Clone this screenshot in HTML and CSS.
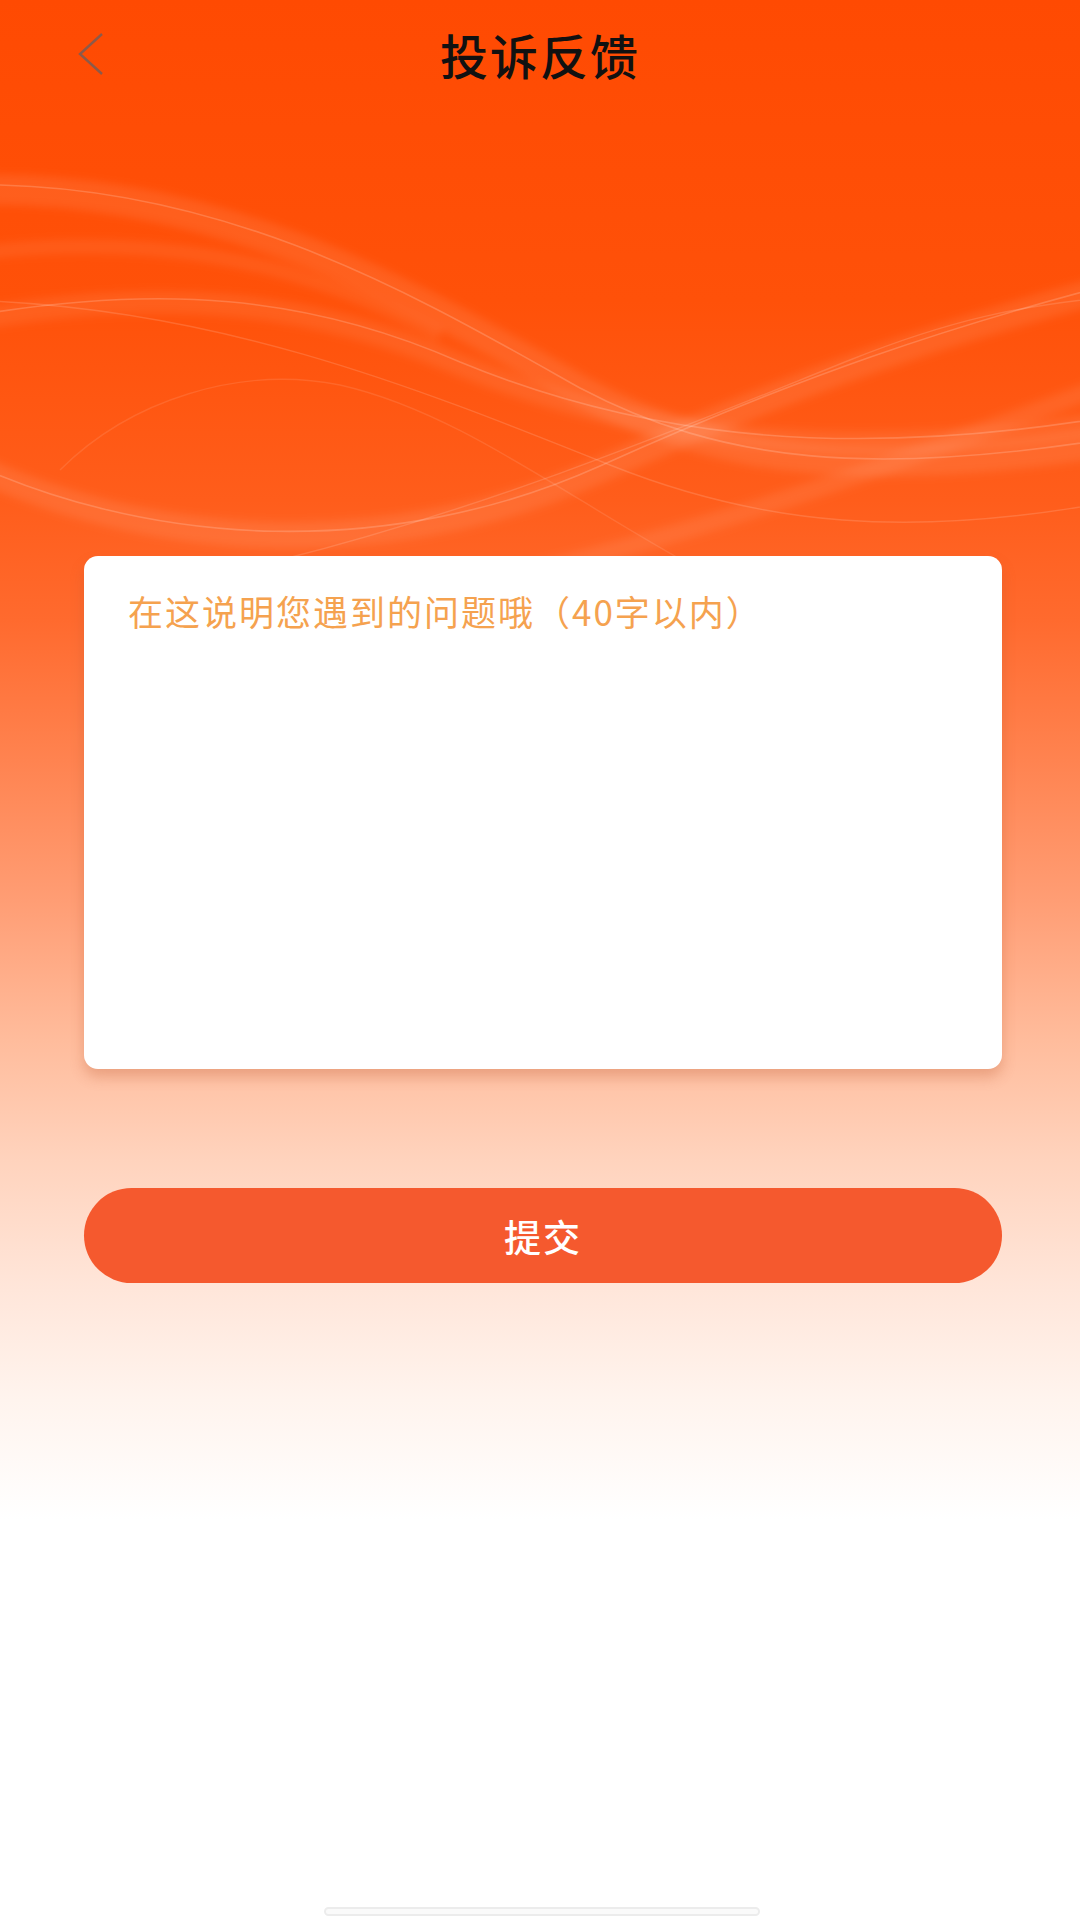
FILE: index.html
```html
<!DOCTYPE html>
<html lang="zh-CN">
<head>
<meta charset="utf-8">
<title>投诉反馈</title>
<link rel="stylesheet" href="styles.css">
</head>
<body>
<div class="page">
  <svg class="waves" viewBox="0 0 1080 600" preserveAspectRatio="none" aria-hidden="true">
    <defs>
      <filter id="soft" x="-10%" y="-30%" width="120%" height="160%">
        <feGaussianBlur stdDeviation="4"/>
      </filter>
    </defs>
    <g fill="none" stroke="#ffffff" filter="url(#soft)">
      <path d="M-40,190 C220,180 420,300 580,390 C720,465 870,480 1120,440" stroke-opacity="0.09" stroke-width="30"/>
      <path d="M-40,322 C160,285 310,300 460,365 C620,430 820,470 1120,420" stroke-opacity="0.08" stroke-width="22"/>
      <path d="M-60,450 C150,560 400,560 600,470 C800,380 950,330 1120,285" stroke-opacity="0.09" stroke-width="26"/>
      <path d="M540,570 C740,520 920,455 1120,380" stroke-opacity="0.08" stroke-width="18"/>
      <path d="M-40,255 C150,230 300,260 440,335" stroke-opacity="0.07" stroke-width="14"/>
    </g>
    <g fill="none" stroke="#ffffff">
      <path d="M-40,185 C220,178 420,298 580,388 C720,462 870,478 1120,437" stroke-opacity="0.18" stroke-width="1.6"/>
      <path d="M-40,318 C160,282 310,296 460,362 C620,428 820,466 1120,415" stroke-opacity="0.18" stroke-width="1.6"/>
      <path d="M-40,300 C210,305 410,385 610,465 C760,525 910,540 1120,500" stroke-opacity="0.14" stroke-width="1.4"/>
      <path d="M-60,448 C150,556 400,556 600,466 C800,376 950,326 1120,282" stroke-opacity="0.18" stroke-width="1.6"/>
      <path d="M280,560 C500,505 700,420 850,360 C950,320 1020,305 1120,296" stroke-opacity="0.14" stroke-width="1.4"/>
      <path d="M60,470 C130,400 240,365 340,385 C460,412 570,500 700,570" stroke-opacity="0.10" stroke-width="1.4"/>
    </g>
  </svg>

  <header class="topbar">
    <button class="back" type="button" aria-label="返回">
      <svg width="32" height="44" viewBox="0 0 32 44">
        <path d="M28,2 L6,22 L28,42" fill="none" stroke="#8c5a4a" stroke-width="2.4" stroke-linejoin="miter"/>
      </svg>
    </button>
    <h1 class="title">投诉反馈</h1>
  </header>

  <main class="content">
    <div class="card">
      <p class="placeholder">在这说明您遇到的问题哦（40字以内）</p>
    </div>
    <button class="submit" type="button">提交</button>
  </main>

  <div class="home-indicator"></div>
</div>
</body>
</html>
```

FILE: styles.css
```css
* { box-sizing: border-box; }

html, body {
  margin: 0;
  padding: 0;
}

body {
  width: 1080px;
  height: 1920px;
  font-family: "Noto Sans CJK SC", "Noto Sans", sans-serif;
  overflow: hidden;
}

.page {
  position: relative;
  width: 1080px;
  height: 1920px;
  display: flex;
  flex-direction: column;
  background: linear-gradient(180deg,
    #ff4a02 0px,
    #ff5109 300px,
    #ff5d1b 500px,
    #ff6a2e 620px,
    #ff8350 760px,
    #ff9d74 900px,
    #ffbc9c 1040px,
    #ffd3bd 1160px,
    #ffe6da 1290px,
    #fff4ee 1400px,
    #ffffff 1520px,
    #ffffff 1920px);
}

.waves {
  position: absolute;
  left: 0;
  top: 0;
  width: 1080px;
  height: 600px;
  pointer-events: none;
}

.topbar {
  position: relative;
  height: 112px;
  display: flex;
  align-items: center;
  justify-content: center;
}

.back {
  position: absolute;
  left: 74px;
  top: 32px;
  padding: 0;
  border: 0;
  background: none;
  width: 32px;
  height: 44px;
}

.back svg { display: block; }

.title {
  margin: 0;
  margin-top: -4px;
  font-size: 48px;
  font-weight: 500;
  color: #111111;
  letter-spacing: 2px;
  line-height: 1;
}

.content {
  position: relative;
  padding: 444px 78px 0 84px;
  display: flex;
  flex-direction: column;
}

.card {
  height: 513px;
  background: #ffffff;
  border-radius: 14px;
  box-shadow: 0 8px 14px rgba(190, 90, 50, 0.32);
  padding: 34px 44px;
}

.placeholder {
  margin: 0;
  font-size: 35px;
  line-height: 1.2;
  color: #f5a24f;
  letter-spacing: 2px;
}

.submit {
  margin-top: 119px;
  height: 95px;
  border: 0;
  border-radius: 48px;
  background: #f5592e;
  color: #ffffff;
  font-family: "Noto Sans CJK SC", "Noto Sans", sans-serif;
  font-size: 37px;
  font-weight: 500;
  letter-spacing: 2px;
}

.home-indicator {
  position: absolute;
  left: 324px;
  bottom: 4px;
  width: 436px;
  height: 9px;
  border-radius: 5px;
  border: 2px solid #ececec;
  background: #fafafa;
}
```
